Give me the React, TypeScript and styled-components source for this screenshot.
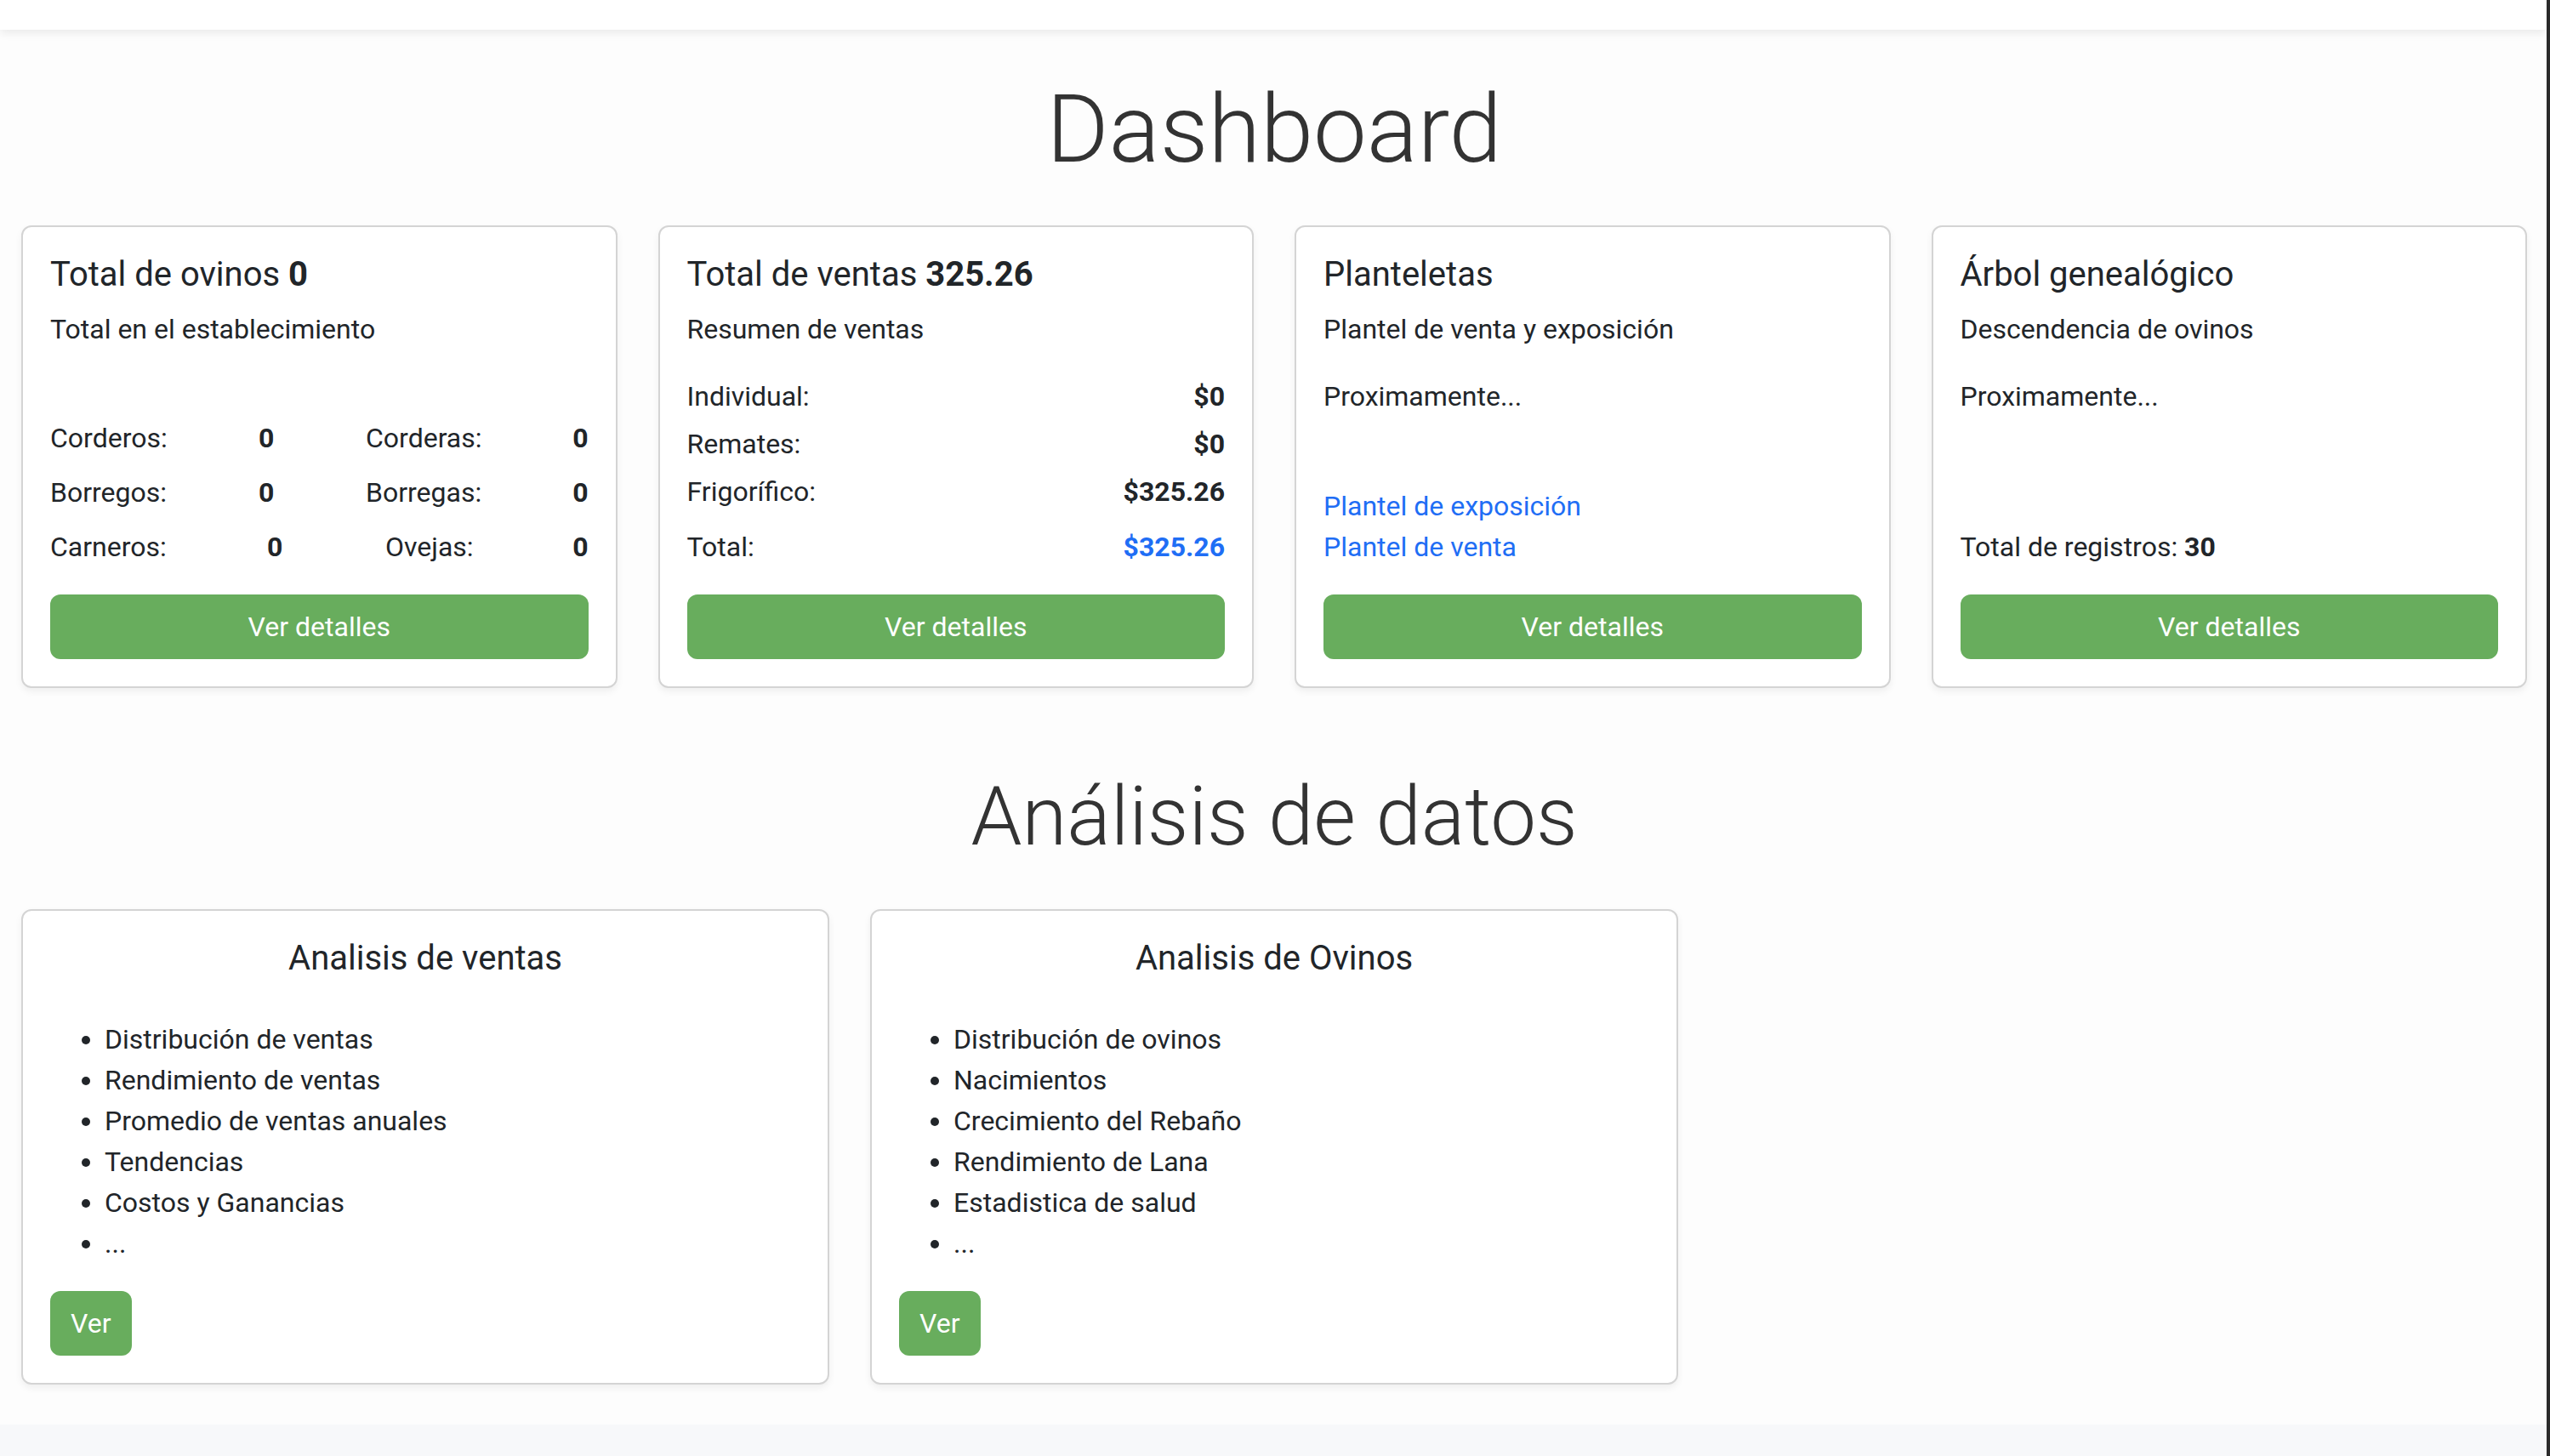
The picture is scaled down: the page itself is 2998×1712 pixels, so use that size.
import React from "react";
import styled, { createGlobalStyle } from "styled-components";

const GlobalStyle = createGlobalStyle`
  html, body {
    margin: 0;
    padding: 0;
    background: #fdfdfd;
  }
  body {
    font-family: Roboto, "Liberation Sans", Arial, sans-serif;
    color: #212529;
    font-size: 32px;
    line-height: 1.5;
  }
  * { box-sizing: border-box; }
`;

const Page = styled.div`
  min-height: 1712px;
  border-right: 4px solid #2b2b2b;
  display: flex;
  flex-direction: column;
  background: #fdfdfd;
`;

const NavBar = styled.div`
  height: 35px;
  background: #ffffff;
  box-shadow: 0 4px 10px rgba(0, 0, 0, 0.08);
  position: relative;
  z-index: 1;
`;

const Main = styled.main`
  padding: 0 23px 0 25px;
  display: flex;
  flex-direction: column;
`;

const DisplayTitle = styled.h1<{ $size: number; $top: number; $bottom: number }>`
  margin: ${(p) => p.$top}px 0 ${(p) => p.$bottom}px;
  font-size: ${(p) => p.$size}px;
  font-weight: 300;
  line-height: 1.2;
  color: #333333;
  text-align: center;
`;

const Grid = styled.div<{ $cols: number }>`
  display: grid;
  grid-template-columns: repeat(${(p) => p.$cols}, 1fr);
  column-gap: 48px;
`;

const Card = styled.div`
  background: #ffffff;
  border: 2px solid #d4d4d4;
  border-radius: 12px;
  box-shadow: 0 4px 8px rgba(0, 0, 0, 0.06);
  padding: 32px;
  display: flex;
  flex-direction: column;
`;

const CardTitle = styled.h5<{ $center?: boolean }>`
  margin: 0 0 16px;
  font-size: 40px;
  font-weight: 400;
  line-height: 1.2;
  text-align: ${(p) => (p.$center ? "center" : "left")};
  b { font-weight: 700; }
`;

const Subtitle = styled.div`
  line-height: 48px;
`;

const Content = styled.div<{ $top: number }>`
  flex: 1;
  display: flex;
  flex-direction: column;
  margin-top: ${(p) => p.$top}px;
`;

const StatsGrid = styled.div`
  display: grid;
  grid-template-columns: 245px 126px 1fr auto;
  row-gap: 16px;
  line-height: 48px;
`;

const Cell = styled.span<{ $indent?: number; $bold?: boolean }>`
  padding-left: ${(p) => p.$indent || 0}px;
  font-weight: ${(p) => (p.$bold ? 700 : 400)};
`;

const SaleRow = styled.div<{ $pushDown?: boolean }>`
  display: flex;
  justify-content: space-between;
  line-height: 48px;
  margin-bottom: 8px;
  ${(p) => (p.$pushDown ? "margin-top: auto; margin-bottom: 0;" : "")}
`;

const Amount = styled.span<{ $accent?: boolean }>`
  font-weight: 700;
  color: ${(p) => (p.$accent ? "#1f6ef5" : "#212529")};
`;

const Line = styled.div`
  line-height: 48px;
`;

const BottomBlock = styled.div`
  margin-top: auto;
  display: flex;
  flex-direction: column;
  line-height: 48px;
  b { font-weight: 700; }
`;

const Link = styled.a`
  color: #1f6ef5;
  text-decoration: none;
  line-height: 48px;
`;

const GreenButton = styled.button<{ $block?: boolean }>`
  margin-top: 32px;
  align-self: ${(p) => (p.$block ? "stretch" : "flex-start")};
  height: 76px;
  padding: 0 24px;
  border: none;
  border-radius: 12px;
  background: #68ad5d;
  color: #ffffff;
  font-family: Roboto, "Liberation Sans", Arial, sans-serif;
  font-size: 32px;
  line-height: 48px;
  cursor: pointer;
`;

const List = styled.ul`
  margin: 31px 0 0;
  padding-left: 64px;
  line-height: 48px;
`;

const Footer = styled.footer`
  margin-top: 47px;
  flex: 1;
  background: #f7f8fa;
  min-height: 35px;
`;

const stats = [
  { a: "Corderos:", av: "0", b: "Corderas:", bv: "0", ai: 0, bi: 0 },
  { a: "Borregos:", av: "0", b: "Borregas:", bv: "0", ai: 0, bi: 0 },
  { a: "Carneros:", av: "0", b: "Ovejas:", bv: "0", ai: 10, bi: 23 },
];

const ventas = [
  "Distribución de ventas",
  "Rendimiento de ventas",
  "Promedio de ventas anuales",
  "Tendencias",
  "Costos y Ganancias",
  "...",
];

const ovinos = [
  "Distribución de ovinos",
  "Nacimientos",
  "Crecimiento del Rebaño",
  "Rendimiento de Lana",
  "Estadistica de salud",
  "...",
];

export default function App() {
  return (
    <Page>
      <GlobalStyle />
      <NavBar />
      <Main>
        <DisplayTitle $size={112} $top={50} $bottom={46}>
          Dashboard
        </DisplayTitle>
        <Grid $cols={4}>
          <Card>
            <CardTitle>
              Total de ovinos <b>0</b>
            </CardTitle>
            <Subtitle>Total en el establecimiento</Subtitle>
            <Content $top={80}>
              <StatsGrid>
                {stats.map((s) => (
                  <React.Fragment key={s.a}>
                    <Cell>{s.a}</Cell>
                    <Cell $bold $indent={s.ai}>{s.av}</Cell>
                    <Cell $indent={s.bi}>{s.b}</Cell>
                    <Cell $bold>{s.bv}</Cell>
                  </React.Fragment>
                ))}
              </StatsGrid>
            </Content>
            <GreenButton $block>Ver detalles</GreenButton>
          </Card>
          <Card>
            <CardTitle>
              Total de ventas <b>325.26</b>
            </CardTitle>
            <Subtitle>Resumen de ventas</Subtitle>
            <Content $top={31}>
              <SaleRow>
                <span>Individual:</span>
                <Amount>$0</Amount>
              </SaleRow>
              <SaleRow>
                <span>Remates:</span>
                <Amount>$0</Amount>
              </SaleRow>
              <SaleRow>
                <span>Frigorífico:</span>
                <Amount>$325.26</Amount>
              </SaleRow>
              <SaleRow $pushDown>
                <span>Total:</span>
                <Amount $accent>$325.26</Amount>
              </SaleRow>
            </Content>
            <GreenButton $block>Ver detalles</GreenButton>
          </Card>
          <Card>
            <CardTitle>Planteletas</CardTitle>
            <Subtitle>Plantel de venta y exposición</Subtitle>
            <Content $top={31}>
              <Line>Proximamente...</Line>
              <BottomBlock>
                <Link href="#">Plantel de exposición</Link>
                <Link href="#">Plantel de venta</Link>
              </BottomBlock>
            </Content>
            <GreenButton $block>Ver detalles</GreenButton>
          </Card>
          <Card>
            <CardTitle>Árbol genealógico</CardTitle>
            <Subtitle>Descendencia de ovinos</Subtitle>
            <Content $top={31}>
              <Line>Proximamente...</Line>
              <BottomBlock>
                <span>
                  Total de registros: <b>30</b>
                </span>
              </BottomBlock>
            </Content>
            <GreenButton $block>Ver detalles</GreenButton>
          </Card>
        </Grid>

        <DisplayTitle $size={96} $top={94} $bottom={50}>
          Análisis de datos
        </DisplayTitle>
        <Grid $cols={3}>
          <Card>
            <CardTitle $center>Analisis de ventas</CardTitle>
            <List>
              {ventas.map((v) => (
                <li key={v}>{v}</li>
              ))}
            </List>
            <GreenButton>Ver</GreenButton>
          </Card>
          <Card>
            <CardTitle $center>Analisis de Ovinos</CardTitle>
            <List>
              {ovinos.map((v) => (
                <li key={v}>{v}</li>
              ))}
            </List>
            <GreenButton>Ver</GreenButton>
          </Card>
        </Grid>
      </Main>
      <Footer />
    </Page>
  );
}
